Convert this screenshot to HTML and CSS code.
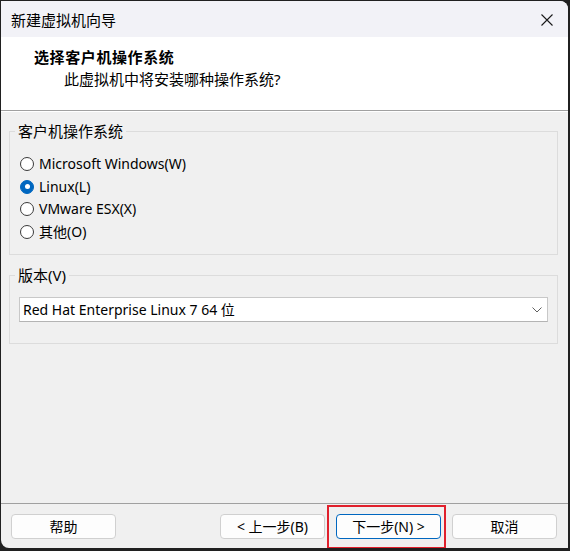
FILE: index.html
```html
<!DOCTYPE html>
<html lang="zh-CN">
<head>
    <meta charset="UTF-8">
    <meta name="viewport" content="width=device-width, initial-scale=1.0">
    <title>新建虚拟机向导</title>
    <link rel="stylesheet" href="styles.css">
</head>
<body>
<div class="window">
    <div class="titlebar">
        <span class="title">新建虚拟机向导</span>
        <svg class="close" width="12" height="12" viewBox="0 0 12 12">
            <path d="M0.5 0.5 L11.5 11.5 M11.5 0.5 L0.5 11.5" stroke="#1a1a1a" stroke-width="1.1" fill="none"/>
        </svg>
    </div>

    <div class="header">
        <div class="heading">选择客户机操作系统</div>
        <div class="subheading">此虚拟机中将安装哪种操作系统?</div>
    </div>

    <div class="content">
        <fieldset class="group">
            <legend>客户机操作系统</legend>
            <div class="options">
                <label class="option"><span class="radio"></span>Microsoft Windows(W)</label>
                <label class="option"><span class="radio checked"></span>Linux(L)</label>
                <label class="option"><span class="radio"></span>VMware ESX(X)</label>
                <label class="option"><span class="radio"></span>其他(O)</label>
            </div>
        </fieldset>

        <fieldset class="group version">
            <legend>版本(V)</legend>
            <div class="select">
                <span>Red Hat Enterprise Linux 7 64 位</span>
                <svg width="10" height="6" viewBox="0 0 10 6">
                    <path d="M0.5 0.5 L5 5 L9.5 0.5" stroke="#606060" stroke-width="1" fill="none"/>
                </svg>
            </div>
        </fieldset>
    </div>

    <div class="footer">
        <button class="btn">帮助</button>
        <div class="nav">
            <button class="btn">&lt; 上一步(B)</button>
            <button class="btn primary marked">下一步(N) &gt;</button>
            <button class="btn">取消</button>
        </div>
    </div>
</div>
</body>
</html>
```

FILE: styles.css
```css
html, body {
    margin: 0;
    height: 551px;
    background: #202020;
    overflow: hidden;
}
body {
    font-family: "Segoe UI", "Noto Sans", "Noto Sans CJK SC", sans-serif;
    font-size: 15px;
    color: #000;
}
.window {
    margin: 1px 2px 0 1px;
    height: 547px;
    background: #f0f0f0;
    border-radius: 0 8px 0 8px;
    overflow: hidden;
    display: flex;
    flex-direction: column;
}
.titlebar {
    height: 36px;
    background: #f2f2f7;
    display: flex;
    align-items: center;
    justify-content: space-between;
    padding: 0 15px 0 10px;
}
.title {
    line-height: 20px;
    margin-top: 1px;
}
.close {
    display: block;
    margin-top: 1px;
}
.header {
    background: #fff;
    height: 63px;
    padding-top: 10px;
    border-bottom: 1px solid #a0a0a0;
    box-shadow: 0 1px 0 #fff;
}
.heading {
    font-weight: bold;
    line-height: 20px;
    padding-left: 33px;
    letter-spacing: 0.6px;
}
.subheading {
    line-height: 20px;
    margin-top: 2px;
    padding-left: 63px;
}
.content {
    padding: 10px 10px 0 8px;
}
.group {
    margin: 0;
    padding: 0 9px 0 9px;
    border: 1px solid #dcdcdc;
}
.group legend {
    padding: 0 3px;
    margin-left: -4px;
    line-height: 20px;
}
.options {
    padding: 12px 0 11px 0;
    font-size: 14px;
}
.option {
    display: flex;
    align-items: center;
    height: 22.6px;
    line-height: 20px;
}
.radio {
    flex: none;
    width: 12px;
    height: 12px;
    border: 1px solid #3a3a3a;
    border-radius: 50%;
    background: #fff;
    margin: 0 5px 0 1px;
    position: relative;
}
.radio.checked {
    border-color: #0067c0;
    background: #0067c0;
}
.radio.checked::after {
    content: "";
    position: absolute;
    left: 3.5px;
    top: 3.5px;
    width: 5px;
    height: 5px;
    border-radius: 50%;
    background: #fff;
}
.version {
    margin-top: 10px;
    padding-bottom: 21px;
}
.select {
    margin: 12px 0 0 0;
    height: 23px;
    background: #fff;
    border: 1px solid #c8c8c8;
    border-bottom-color: #b4b4b4;
    display: flex;
    align-items: center;
    justify-content: space-between;
    padding: 0 5px 0 3px;
    line-height: 20px;
    font-size: 14px;
}
.select svg {
    display: block;
}
.footer {
    margin-top: auto;
    border-top: 1px solid #a0a0a0;
    height: 34px;
    padding: 10px 11px 0 10px;
    display: flex;
    justify-content: space-between;
    align-items: flex-start;
}
.nav {
    display: flex;
    gap: 11px;
}
.btn {
    width: 105px;
    height: 25px;
    border: 1px solid #d0d0d0;
    border-radius: 4px;
    background: #fdfdfd;
    font: inherit;
    font-size: 14px;
    line-height: 20px;
    padding: 0;
    color: #000;
}
.btn.primary {
    border-color: #0067c0;
}
.marked {
    position: relative;
}
/* red highlight frame drawn around the next-step button */
.marked::after {
    content: "";
    position: absolute;
    left: -10px;
    top: -10px;
    width: 115px;
    height: 40px;
    border: 2px solid #e0202c;
}
```
